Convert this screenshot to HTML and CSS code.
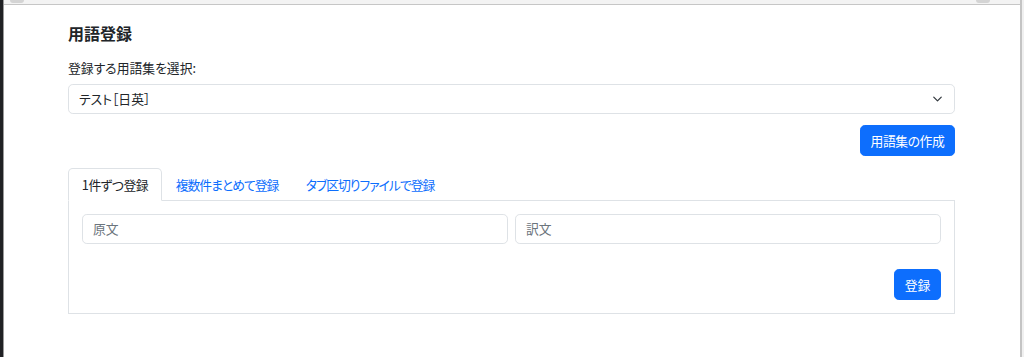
FILE: index.html
```html
<!DOCTYPE html>
<html lang="ja">
<head>
<meta charset="utf-8">
<title>用語登録</title>
<link rel="stylesheet" href="styles.css">
</head>
<body>
<div class="frame">
  <div class="side-dark"></div>
  <div class="window">
    <div class="topbar">
      <span class="knob knob-left"></span>
      <span class="knob knob-right"></span>
    </div>
    <main class="content">
      <h5 class="title">用語登録</h5>
      <label class="form-label" for="glossary">登録する用語集を選択:</label>
      <div class="select">
        <span>テスト［日英］</span>
        <svg class="chevron" viewBox="0 0 16 16" width="13" height="10"><path d="m2 5 6 6 6-6" fill="none" stroke="#343a40" stroke-width="2" stroke-linecap="round" stroke-linejoin="round"/></svg>
      </div>
      <div class="actions">
        <button class="btn btn-create">用語集の作成</button>
      </div>
      <ul class="tabs">
        <li class="tab active">1件ずつ登録</li>
        <li class="tab">複数件まとめて登録</li>
        <li class="tab">タブ区切りファイルで登録</li>
      </ul>
      <div class="tab-pane">
        <div class="inputs">
          <div class="input placeholder">原文</div>
          <div class="input placeholder">訳文</div>
        </div>
        <div class="pane-actions">
          <button class="btn">登録</button>
        </div>
      </div>
    </main>
  </div>
  <div class="side-right"></div>
</div>
</body>
</html>
```

FILE: styles.css
```css
* { box-sizing: border-box; }
html, body {
  margin: 0;
  padding: 0;
  background: #ffffff;
}
body {
  font-family: "Noto Sans CJK JP", "Noto Sans", sans-serif;
  font-size: 12.8px;
  line-height: 1.5;
  color: #212529;
  font-feature-settings: "palt";
}
.frame {
  display: flex;
  height: 357px;
  overflow: hidden;
}
.side-dark {
  flex: none;
  width: 4px;
  background: #202124;
  border-right: 1px solid #9a9a9a;
}
.window {
  flex: 1;
  display: flex;
  flex-direction: column;
  background: #ffffff;
}
.topbar {
  height: 5px;
  background: #f3f3f3;
  border-bottom: 1px solid #c6c6c6;
  display: flex;
  justify-content: space-between;
  padding: 0 30px 0 6px;
  flex: none;
}
.knob {
  width: 14px;
  height: 3px;
  background: #d4d4d4;
  border-radius: 0 0 7px 7px;
}
.side-right {
  width: 4px;
  flex: none;
  background: #f0f0f0;
  border-left: 2px solid #c4c4c4;
}
.content {
  width: 887px;
  margin-left: 64px;
  padding-top: 19px;
}
.title {
  margin: 0 0 15px;
  font-size: 16px;
  font-weight: 700;
  line-height: 1.2;
  color: #212529;
}
.form-label {
  display: block;
  margin-bottom: 6.5px;
}
.select {
  height: 30px;
  border: 1px solid #dee2e6;
  border-radius: 4.8px;
  padding: 0 9.6px 0 10px;
  display: flex;
  align-items: center;
  justify-content: space-between;
}
.chevron { display: block; }
.actions {
  display: flex;
  justify-content: flex-end;
  margin-top: 11px;
}
.btn {
  font: inherit;
  font-feature-settings: "palt";
  color: #ffffff;
  background: #0d6efd;
  border: 1px solid #0d6efd;
  border-radius: 4.8px;
  padding: 4.8px 9.6px;
  line-height: 19.2px;
  height: 31px;
  cursor: pointer;
}
.btn-create {
  letter-spacing: -0.4px;
}
.tabs {
  list-style: none;
  margin: 12px 0 0;
  padding: 0;
  display: flex;
  border-bottom: 1px solid #dee2e6;
}
.tab {
  padding: 6px 12.8px;
  line-height: 19.2px;
  letter-spacing: -1px;
  color: #0d6efd;
  border: 1px solid transparent;
  border-radius: 4.8px 4.8px 0 0;
  margin-bottom: -1px;
}
.tab.active {
  letter-spacing: -0.5px;
  color: #212529;
  background: #ffffff;
  border-color: #dee2e6 #dee2e6 #ffffff;
}
.tab-pane {
  border: 1px solid #dee2e6;
  border-top: none;
  padding: 12.8px 13px 13px;
}
.inputs {
  display: grid;
  grid-template-columns: 1fr 1fr;
  gap: 7px;
}
.input {
  height: 30px;
  border: 1px solid #dee2e6;
  border-radius: 4.8px;
  padding: 0 10px;
  display: flex;
  align-items: center;
}
.placeholder { color: #6c757d; }
.pane-actions {
  display: flex;
  justify-content: flex-end;
  margin-top: 25px;
}
```
